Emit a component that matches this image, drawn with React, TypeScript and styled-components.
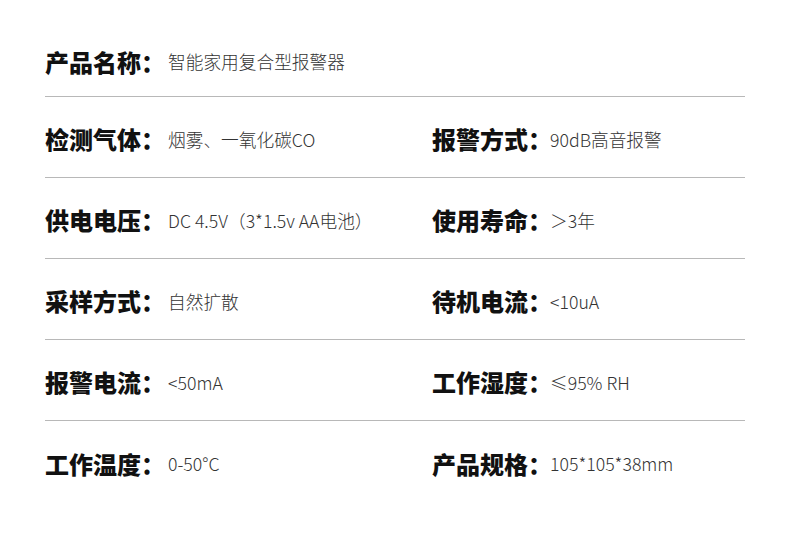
import React from "react";
import styled, { createGlobalStyle } from "styled-components";

type Spec = { label: string; value: string };

const rows: Array<[Spec, Spec | null]> = [
    [{ label: "产品名称：", value: "智能家用复合型报警器" }, null],
    [{ label: "检测气体：", value: "烟雾、一氧化碳CO" }, { label: "报警方式：", value: "90dB高音报警" }],
    [{ label: "供电电压：", value: "DC 4.5V（3*1.5v AA电池）" }, { label: "使用寿命：", value: "＞3年" }],
    [{ label: "采样方式：", value: "自然扩散" }, { label: "待机电流：", value: "<10uA" }],
    [{ label: "报警电流：", value: "<50mA" }, { label: "工作湿度：", value: "≤95% RH" }],
    [{ label: "工作温度：", value: "0-50°C" }, { label: "产品规格：", value: "105*105*38mm" }],
];

const Global = createGlobalStyle`
    html, body {
        margin: 0;
        padding: 0;
        background: #fff;
    }
    body {
        font-family: "Noto Sans CJK SC", "Noto Sans", sans-serif;
    }
`;

export default function App() {
    return <Page>
        <Global />
        <Table>
            {rows.map(([left, right], i) => <Row key={i} $first={i === 0} $last={i === rows.length - 1}>
                <Cell>
                    <Label $w={123}>{left.label}</Label>
                    <Value>{left.value}</Value>
                </Cell>
                {right && <Cell>
                    <Label $w={118}>{right.label}</Label>
                    <Value>{right.value}</Value>
                </Cell>}
            </Row>)}
        </Table>
    </Page>;
}

const Page = styled.div`
    width: 790px;
    height: 545px;
    background: #fff;
    padding: 0 45px;
    box-sizing: border-box;
`;

const Table = styled.div`
    display: flex;
    flex-direction: column;
`;

const Row = styled.div<{ $first: boolean; $last: boolean }>`
    display: grid;
    grid-template-columns: 387px 1fr;
    align-items: center;
    height: ${p => p.$first ? 97 : 81}px;
    padding-top: ${p => p.$first ? 26 : 3}px;
    box-sizing: border-box;
    border-bottom: ${p => p.$last ? "none" : "1px solid #b8b8b8"};
`;

const Cell = styled.div`
    display: flex;
    align-items: center;
`;

const Label = styled.span<{ $w: number }>`
    width: ${p => p.$w}px;
    flex-shrink: 0;
    font-size: 24px;
    font-weight: 900;
    color: #111;
    white-space: nowrap;
`;

const Value = styled.span`
    font-size: 17.7px;
    font-weight: 300;
    color: #333;
    white-space: nowrap;
`;
